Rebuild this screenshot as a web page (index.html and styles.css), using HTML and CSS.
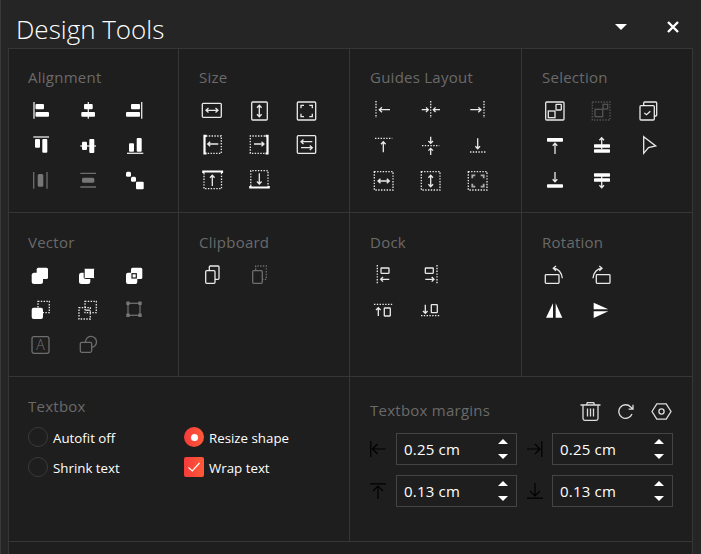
FILE: index.html
```html
<!DOCTYPE html>
<html lang="en">

<head>
    <meta charset="UTF-8">
    <title>Design Tools</title>
    <link rel="stylesheet" href="styles.css">
</head>

<body>
    <div class="header">
        <div class="title">Design Tools</div>
        <div class="caret"></div>
        <svg class="close" width="12" height="12" viewBox="0 0 12 12"><path d="M1 1L11 11M11 1L1 11"/></svg>
    </div>

    <div class="panel">
        <!-- row 1 -->
        <div class="section first-row">
            <div class="label">Alignment</div>
            <div class="icons">
                <svg viewBox="0 0 20 20"><path class="s" d="M3 2V18.7"/><rect class="f" x="4.5" y="4" width="8.5" height="5.3" rx="1"/><rect class="f" x="4.5" y="12" width="13.5" height="4.8" rx="1"/></svg>
                <svg viewBox="0 0 20 20"><path class="s" d="M10.3 2V18.7"/><rect class="f" x="6" y="4" width="8.7" height="5.3" rx="1"/><rect class="f" x="3.3" y="12" width="13.7" height="4.8" rx="1"/></svg>
                <svg viewBox="0 0 20 20"><path class="s" d="M16.7 2V18.7"/><rect class="f" x="6" y="4" width="9" height="5.3" rx="1"/><rect class="f" x="1" y="12" width="14" height="4.8" rx="1"/></svg>
                <svg viewBox="0 0 20 20"><path class="s" d="M2.3 2H18"/><rect class="f" x="4" y="4" width="5" height="8.7" rx="1"/><rect class="f" x="11.3" y="4" width="5" height="13.7" rx="1"/></svg>
                <svg viewBox="0 0 20 20"><path class="s" d="M2.3 11H18"/><rect class="f" x="4" y="6.7" width="5" height="8.3" rx="1"/><rect class="f" x="11.3" y="4" width="5" height="14" rx="1"/></svg>
                <svg viewBox="0 0 20 20"><path class="s" d="M2 18.3H18.3"/><rect class="f" x="4" y="8.3" width="5" height="8.4" rx="1"/><rect class="f" x="11.7" y="3" width="5" height="13.7" rx="1"/></svg>
                <svg class="dim" viewBox="0 0 20 20"><path class="s" d="M2.7 2V18.7M16 2V18.7"/><rect class="f" x="6.7" y="4" width="5.6" height="12.7" rx="1.5"/></svg>
                <svg class="dim" viewBox="0 0 20 20"><path class="s" d="M2.3 3.3H18M2.3 17H18"/><rect class="f" x="4" y="7.7" width="12.3" height="5" rx="1.5"/></svg>
                <svg viewBox="0 0 20 20"><rect class="f" x="1" y="1.7" width="5" height="5" rx="1.5"/><rect class="f" x="6" y="6.7" width="5" height="5" rx="1.5"/><rect class="f" x="11" y="11.7" width="7.7" height="7.6" rx="1"/></svg>
            </div>
        </div>

        <div class="section first-row second">
            <div class="label">Size</div>
            <div class="icons">
                <svg viewBox="0 0 20 20"><rect class="s" x="1.3" y="3.3" width="19" height="14" rx="1"/><path class="s" d="M5 10.3H17M7.5 8L5 10.3L7.5 12.6M14.5 8L17 10.3L14.5 12.6"/></svg>
                <svg viewBox="-1 0 20 20"><rect class="s" x="2.7" y="2" width="15.6" height="18" rx="1"/><path class="s" d="M10.3 5.3V16.7M8 7.8L10.3 5.3L12.6 7.8M8 14.2L10.3 16.7L12.6 14.2"/></svg>
                <svg viewBox="-1 0 20 20"><rect class="s" x="1.3" y="2" width="18.4" height="18" rx="1"/><path class="s" d="M5 8.3V5.3H8M13.3 5.3H16.3V8.3M16.3 13.7V16.7H13.3M8 16.7H5V13.7"/></svg>

                <svg viewBox="0 0 20 20"><path class="d" d="M5 1H20.3V18.3H5"/><path class="b" d="M5.5 0.8H3.5V18.5H5.5"/><path class="s" d="M17.3 9H6.7M9.2 6.7L6.7 9L9.2 11.3"/></svg>
                <svg viewBox="-1 0 20 20"><path class="d" d="M16 1H1.3V18.3H16"/><path class="b" d="M16.5 0.8H18.5V18.5H16.5"/><path class="s" d="M5 9H15M12.5 6.7L15 9L12.5 11.3"/></svg>
                <svg viewBox="-1 0 20 20"><rect class="s" x="1.3" y="0.7" width="18.4" height="17.6" rx="1"/><path class="s" d="M16.3 6.7H5M7.5 4.4L5 6.7L7.5 9M5 12.7H16.3M13.8 10.4L16.3 12.7L13.8 15"/></svg>

                <svg viewBox="0 0 20 20"><path class="d" d="M3 3V18.7H20.5V3"/><path class="b" d="M2.3 3V1.5H21V3"/><path class="s" d="M11.3 16V5.3M9 7.8L11.3 5.3L13.6 7.8"/></svg>
                <svg viewBox="-1 0 20 20"><path class="d" d="M1.8 16V0.7H19V16"/><path class="b" d="M1.3 16V17.5H19.7V16"/><path class="s" d="M10.3 3.3V14M8 11.5L10.3 14L12.6 11.5"/></svg>
            </div>
        </div>

        <div class="section first-row third">
            <div class="label">Guides Layout</div>
            <div class="icons">
                <svg viewBox="0 0 20 20"><path class="d" d="M3 1V18"/><path class="s" d="M17 9.7H6.3M9 7.2L6.3 9.7L9 12.2"/></svg>
                <svg viewBox="0 0 20 20"><path class="d" d="M10.7 1V18"/><path class="s" d="M1.7 9.7H8.3M6 7.4L8.3 9.7L6 12M20 9.7H13.3M15.6 7.4L13.3 9.7L15.6 12"/></svg>
                <svg viewBox="0 0 20 20"><path class="d" d="M17 1V18"/><path class="s" d="M3.3 9.7H14M11.3 7.2L14 9.7L11.3 12.2"/></svg>

                <svg viewBox="0 0 20 20"><path class="d" d="M2 3.3H19.3"/><path class="s" d="M10.3 17.3V6.7M8 9.2L10.3 6.7L12.6 9.2"/></svg>
                <svg viewBox="0 0 20 20"><path class="d" d="M2 10.7H19.3"/><path class="s" d="M10.7 1.7V8.3M8.4 6L10.7 8.3L13 6M10.7 20V13.3M8.4 15.6L10.7 13.3L13 15.6"/></svg>
                <svg viewBox="0 0 20 20"><path class="d" d="M3 17H19.7"/><path class="s" d="M10.7 3.3V13.7M8.4 11.2L10.7 13.7L13 11.2"/></svg>

                <svg viewBox="0 0 20 20"><rect class="d" x="1.3" y="1.7" width="18.7" height="18.3"/><path class="s" d="M5 11H16.3M7.5 8.7L5 11L7.5 13.3M13.8 8.7L16.3 11L13.8 13.3"/></svg>
                <svg viewBox="0 0 20 20"><rect class="d" x="1.3" y="1.7" width="18.7" height="18.3"/><path class="s" d="M10.7 5.3V16.7M8.4 7.8L10.7 5.3L13 7.8M8.4 14.2L10.7 16.7L13 14.2"/></svg>
                <svg viewBox="0 0 20 20"><rect class="d" x="1.3" y="1.7" width="18.7" height="18.3"/><path class="s grey" d="M5.3 8.3V5.3H8.3M13.7 5.3H16.7V8.3M16.7 13.7V16.7H13.7M8.3 16.7H5.3V13.7"/></svg>
            </div>
        </div>

        <div class="section first-row last">
            <div class="label">Selection</div>
            <div class="icons">
                <svg viewBox="0 0 20 20"><rect class="s" x="1.7" y="2" width="18.3" height="18" rx="1"/><rect class="s" x="4.3" y="11" width="6.7" height="6.7"/><rect class="s" x="12" y="4.3" width="5.3" height="5.7" rx="0.5"/></svg>
                <svg class="faint" viewBox="0 0 20 20"><rect class="d" x="1.3" y="2" width="17.7" height="18"/><rect class="s" x="4" y="9.3" width="7.7" height="7.4"/><rect class="s" x="12" y="4.3" width="4.7" height="4.7"/></svg>
                <svg viewBox="0 0 20 20"><path class="s" d="M5.7 5.7V3A1 1 0 0 1 6.7 2H17.7A1 1 0 0 1 18.7 3V15A1 1 0 0 1 17.7 16H16.3"/><rect class="s" x="2" y="5.7" width="14.3" height="14.3" rx="1"/><path class="s" d="M6.3 13L8.5 14.7L12.3 11.3"/></svg>

                <svg viewBox="0 0 20 20"><rect class="f" x="3" y="3" width="16" height="3.7" rx="0.8"/><path class="s" d="M11 19V8.3M8.7 10.8L11 8.3L13.3 10.8"/></svg>
                <svg viewBox="0 0 20 20"><rect class="f" x="3" y="9.3" width="16" height="3.4" rx="0.6"/><rect class="f" x="3" y="14.3" width="16" height="3.4" rx="0.6"/><path class="s" d="M10.7 14V2.7M8.4 5.2L10.7 2.7L13 5.2"/></svg>
                <svg viewBox="0 0 20 20"><path class="s" d="M5.7 1.7L17.7 11L10.5 12.5L5.7 18.3Z"/></svg>

                <svg viewBox="0 0 20 20"><rect class="f" x="3" y="14.3" width="16" height="3.4" rx="0.8"/><path class="s" d="M11 2V11.7M8.7 9.2L11 11.7L13.3 9.2"/></svg>
                <svg viewBox="0 0 20 20"><rect class="f" x="3" y="3.3" width="16" height="3.4" rx="0.6"/><rect class="f" x="3" y="8.3" width="16" height="3.4" rx="0.6"/><path class="s" d="M10.7 6V17.7M8.4 15.2L10.7 17.7L13 15.2"/></svg>
            </div>
        </div>

        <!-- row 2 -->
        <div class="section">
            <div class="label">Vector</div>
            <div class="icons">
                <svg viewBox="0 0 20 20"><rect class="f" x="5.7" y="2.7" width="11.3" height="11.3" rx="1.5"/><rect class="f" x="0.7" y="7.7" width="11.3" height="11.3" rx="2.5"/></svg>
                <svg viewBox="0 0 20 20"><rect class="f" x="1" y="7.7" width="11.3" height="11.3" rx="2.5"/><rect class="f gap" x="6.2" y="3.2" width="10.3" height="10.3" rx="1"/></svg>
                <svg viewBox="0 0 20 20"><rect class="f" x="6" y="2.7" width="11.3" height="11.3" rx="1.5"/><rect class="f" x="1" y="7.7" width="11.3" height="11.3" rx="2"/><rect class="hole" x="7" y="8.7" width="4.3" height="4.3"/></svg>

                <svg viewBox="0 0 20 20"><rect class="d" x="7" y="1.3" width="11.3" height="11.4"/><rect class="f" x="0.7" y="7.7" width="11.3" height="11.3" rx="2"/></svg>
                <svg viewBox="0 0 20 20"><rect class="d" x="7" y="1.3" width="11.3" height="11.4"/><rect class="d" x="1" y="7.7" width="11.3" height="11.3"/><path class="s" d="M7.5 10.2H11.8"/></svg>
                <svg class="dim" viewBox="0 0 20 20"><rect class="s" x="3" y="3.3" width="12" height="12"/><rect class="f" x="1.3" y="1.6" width="3.4" height="3.4" rx="0.4"/><rect class="f" x="13.3" y="1.6" width="3.4" height="3.4" rx="0.4"/><rect class="f" x="1.3" y="13.6" width="3.4" height="3.4" rx="0.4"/><rect class="f" x="13.3" y="13.6" width="3.4" height="3.4" rx="0.4"/></svg>

                <svg class="dim" viewBox="0 0 20 20"><rect class="s" x="1" y="1.7" width="17" height="16.6" rx="2"/><text class="letter" x="9.5" y="15">A</text></svg>
                <svg class="dim" viewBox="0 0 20 20"><rect class="s" x="2.3" y="7.3" width="11.4" height="10" rx="1.5"/><path class="s" d="M7.5 7A5.5 5.5 0 1 1 13.7 12.4"/></svg>
            </div>
        </div>

        <div class="section second">
            <div class="label">Clipboard</div>
            <div class="icons">
                <svg viewBox="0 0 20 20"><path class="s" d="M8.3 5.7V2A1 1 0 0 1 9.3 1H17A1 1 0 0 1 18 2V13.3A1 1 0 0 1 17 14.3H14"/><rect class="s" x="4.7" y="5.7" width="9.3" height="12.6" rx="1"/></svg>
                <svg class="dim" viewBox="-1 0 20 20"><path class="d" d="M6.7 5V1H17.3V14.3H13.3"/><rect class="s" x="3.7" y="5.7" width="9.6" height="12.6" rx="1"/></svg>
            </div>
        </div>

        <div class="section third">
            <div class="label">Dock</div>
            <div class="icons two">
                <svg viewBox="0 0 20 20"><path class="d" d="M4.3 0V18.3"/><rect class="s" x="8" y="3" width="8" height="5.3" rx="0.5"/><path class="s" d="M16.3 14.3H7.7M10 12L7.7 14.3L10 16.6"/></svg>
                <svg viewBox="0 0 20 20"><path class="d" d="M17 0V18.3"/><rect class="s" x="5.3" y="3" width="8" height="5.3" rx="0.5"/><path class="s" d="M5.3 14.3H14M11.7 12L14 14.3L11.7 16.6"/></svg>
                <svg viewBox="0 0 20 20"><path class="d" d="M1 4.3H20"/><rect class="s" x="11.3" y="8" width="6" height="8" rx="0.5"/><path class="s" d="M5.3 16V7.7M3 10L5.3 7.7L7.6 10"/></svg>
                <svg viewBox="0 0 20 20"><path class="d" d="M1 15.7H20.3"/><rect class="s" x="11.3" y="4.7" width="6" height="8" rx="0.5"/><path class="s" d="M5.3 4.7V13.3M3 11L5.3 13.3L7.6 11"/></svg>
            </div>
        </div>

        <div class="section last">
            <div class="label">Rotation</div>
            <div class="icons two">
                <svg viewBox="0 0 20 20"><rect class="s" x="1.3" y="9.7" width="13.7" height="8.6" rx="0.8"/><path class="s" d="M18.3 13.3C18 7.5 14 3.5 9.7 3.3M12 1L9.3 3.3L12 5.8"/></svg>
                <svg viewBox="0 0 20 20"><rect class="s" x="5.3" y="9.7" width="13.7" height="8.6" rx="0.8"/><path class="s" d="M2 13.3C2.3 7.5 6.3 3.5 10.7 3.3M8.3 1L11 3.3L8.3 5.8"/></svg>
                <svg viewBox="0 0 20 20"><path class="f" d="M9 3.3V17.7H2Z"/><path class="f" d="M11.7 3.3V17.7H18.3Z"/></svg>
                <svg viewBox="0 0 20 20"><path class="f" d="M2.7 2.7V9.3H17.3Z"/><path class="f" d="M2.7 18V11.3H17.3Z"/></svg>
            </div>
        </div>

        <!-- row 3 -->
        <div class="section wide">
            <div class="label">Textbox</div>
            <div class="options">
                <div class="option"><span class="radio"></span><span class="opt-text">Autofit off</span></div>
                <div class="option"><span class="radio on"></span><span class="opt-text">Resize shape</span></div>
                <div class="option"><span class="radio"></span><span class="opt-text">Shrink text</span></div>
                <div class="option">
                    <span class="check"><svg width="20" height="20" viewBox="0 0 20 20"><path d="M4.5 10.5L8.3 14L15.5 6"/></svg></span><span class="opt-text">Wrap text</span>
                </div>
            </div>
        </div>

        <div class="section wide margins">
            <div class="margins-head">
                <div class="label">Textbox margins</div>
                <svg class="trash" width="21" height="19" viewBox="0 0 21 19"><path d="M0.5 3H20.5M6.5 3L7.3 0.7H13.7L14.5 3M3 3V16.5A1.8 1.8 0 0 0 4.8 18.3H16.2A1.8 1.8 0 0 0 18 16.5V3M7.5 6.5V14.5M10.5 6.5V14.5M13.5 6.5V14.5"/></svg>
                <svg class="refresh" width="16" height="15" viewBox="0 0 16 15"><path d="M14 10A6.8 6.8 0 1 1 12.7 3L14.8 5M15 0.8V5.2H10.6"/></svg>
                <svg class="hex" width="21" height="17" viewBox="0 0 21 17"><path d="M1 8.5L5.8 0.8H15.2L20 8.5L15.2 16.2H5.8Z"/><circle cx="10.5" cy="8.5" r="2.6"/></svg>
            </div>
            <div class="margin-grid">
                <svg class="margin-icon" viewBox="0 0 16 16"><path d="M0.8 0V16M15.5 8H2.5M7.5 3L2.5 8L7.5 13"/></svg>
                <div class="field"><span>0.25 cm</span><div class="spin"><i class="up"></i><i class="down"></i></div></div>
                <svg class="margin-icon" viewBox="0 0 16 16"><path d="M14.8 0V16M0 8H13M8 3L13 8L8 13"/></svg>
                <div class="field"><span>0.25 cm</span><div class="spin"><i class="up"></i><i class="down"></i></div></div>
                <svg class="margin-icon" viewBox="0 0 16 16"><path d="M0 0.8H16M8 16V3M3 8L8 3L13 8"/></svg>
                <div class="field"><span>0.13 cm</span><div class="spin"><i class="up"></i><i class="down"></i></div></div>
                <svg class="margin-icon" viewBox="0 0 16 16"><path d="M0 15.2H16M8 0V13M3 8L8 13L13 8"/></svg>
                <div class="field"><span>0.13 cm</span><div class="spin"><i class="up"></i><i class="down"></i></div></div>
            </div>
        </div>

        <div class="filler"></div>
    </div>
</body>

</html>
```

FILE: styles.css
```css
html,
body {
    margin: 0;
    height: 554px;
    overflow: hidden;
}

body {
    display: flex;
    flex-direction: column;
    background-color: #252525;
    border-left: 1px solid #3a3a3a;
    font-family: "Open Sans", sans-serif;
    color: #fff;
}

.header {
    display: flex;
    align-items: center;
    height: 48px;
    padding-left: 15px;
    flex: none;
}

.title {
    font-size: 26px;
    font-weight: 300;
    margin-right: auto;
    position: relative;
    top: 5px;
}

.caret {
    width: 0;
    height: 0;
    border-left: 6px solid transparent;
    border-right: 6px solid transparent;
    border-top: 6px solid #fff;
    margin: 6px 40px 0 0;
}

.close {
    margin: 5px 22px 0 0;
}

.close path {
    stroke: #fff;
    stroke-width: 2.4;
    fill: none;
}

.panel {
    flex: 1;
    width: 685px;
    margin-left: 7px;
    box-sizing: border-box;
    background-color: #1e1e1e;
    border-top: 1px solid #363636;
    border-left: 1px solid #363636;
    display: grid;
    grid-template-columns: 170px 171px 172px 171px;
    grid-template-rows: 164px 164px 165px 1fr;
}

.section {
    box-sizing: border-box;
    padding: 19px 0 0 19px;
    border-right: 1px solid #363636;
    border-bottom: 1px solid #363636;
}

.first-row {
    padding-top: 18px;
}

.second,
.last {
    padding-left: 20px;
}

.third {
    padding-left: 20px;
}

.wide {
    grid-column: span 2;
}

.filler {
    grid-column: 1 / 5;
    border-right: 1px solid #363636;
}

.label {
    font-size: 15px;
    letter-spacing: 0.25px;
    line-height: 20px;
    color: #6a6a6a;
}

.icons {
    display: grid;
    grid-template-columns: repeat(3, 20px);
    grid-auto-rows: 20px;
    column-gap: 27px;
    row-gap: 15px;
    margin: 13px 0 0 3px;
}

.second .icons,
.last .icons {
    margin-left: 2px;
}

.icons.two {
    grid-template-columns: repeat(2, 20px);
}

.icons svg {
    width: 20px;
    height: 20px;
    overflow: visible;
    color: #fff;
}

.icons svg.dim {
    color: #777;
}

.icons svg.faint {
    color: #5a5a5a;
}

.s {
    fill: none;
    stroke: currentColor;
    stroke-width: 1.3;
    opacity: 0.9;
}

.s.grey {
    stroke: #bbb;
    stroke-width: 1.8;
}

.f {
    fill: currentColor;
}

.f.gap {
    stroke: #1e1e1e;
    stroke-width: 1;
}

.d {
    fill: none;
    stroke: currentColor;
    stroke-width: 1.3;
    stroke-dasharray: 1.4 1.4;
    opacity: 0.9;
}

.b {
    fill: none;
    stroke: currentColor;
    stroke-width: 2.2;
}

.hole {
    fill: #fff;
    stroke: #1e1e1e;
    stroke-width: 1.2;
}

.letter {
    font-family: "Open Sans", sans-serif;
    font-size: 14px;
    font-weight: 300;
    text-anchor: middle;
    fill: currentColor;
}

.options {
    display: grid;
    grid-template-columns: 156px 1fr;
    grid-auto-rows: 20px;
    row-gap: 10px;
    margin-top: 11px;
}

.option {
    display: flex;
    align-items: center;
    gap: 5px;
    font-size: 13.3px;
}

.opt-text {
    margin-top: 2px;
}

.radio {
    box-sizing: border-box;
    width: 20px;
    height: 20px;
    border-radius: 50%;
    border: 1.5px solid #3a3a3a;
    display: flex;
    align-items: center;
    justify-content: center;
}

.radio.on {
    border: 0;
    background: linear-gradient(90deg, #f63b3b, #ff5a36);
}

.radio.on::after {
    content: "";
    width: 7px;
    height: 7px;
    border-radius: 50%;
    background-color: #fff;
}

.check {
    width: 20px;
    height: 20px;
    border-radius: 2px;
    background: linear-gradient(90deg, #f63b3b, #ff5a36);
}

.check svg {
    display: block;
}

.check path {
    fill: none;
    stroke: #fff;
    stroke-width: 1.2;
}

.margins {
    padding: 24px 0 0 20px;
}

.margins-head {
    display: flex;
    align-items: center;
    width: 302px;
    height: 20px;
}

.margins-head .label {
    margin: 0 auto 2px 0;
}

.margins-head svg {
    fill: none;
    stroke: #ddd;
    stroke-width: 1.3;
}

.refresh {
    margin: 0 17px;
}

.margin-grid {
    display: grid;
    grid-template-columns: 16px 121px 15px 121px;
    column-gap: 10px;
    row-gap: 10px;
    grid-auto-rows: 32px;
    margin-top: 12px;
    align-items: center;
}

.margin-icon {
    width: 16px;
    height: 16px;
}

.margin-icon path {
    fill: none;
    stroke: #000;
    stroke-width: 1.2;
}

.field {
    box-sizing: border-box;
    height: 32px;
    border: 1px solid #444;
    display: flex;
    align-items: center;
    justify-content: space-between;
    padding: 0 8px 0 7px;
    font-size: 15px;
    letter-spacing: 0.2px;
}

.spin {
    display: flex;
    flex-direction: column;
    gap: 10px;
}

.spin i {
    display: block;
    width: 0;
    height: 0;
    border-left: 5px solid transparent;
    border-right: 5px solid transparent;
}

.spin .up {
    border-bottom: 5px solid #fff;
}

.spin .down {
    border-top: 5px solid #fff;
}
```
